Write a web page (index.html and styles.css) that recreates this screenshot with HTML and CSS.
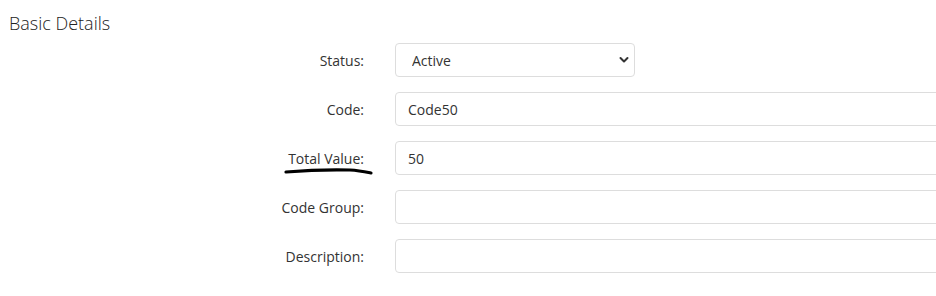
FILE: index.html
```html
<html lang="en"><head>
    <meta charset="UTF-8">
    <meta name="viewport" content="width=device-width, initial-scale=1.0">
    <title>Basic Details</title>
    <link rel="stylesheet" href="styles.css">
</head>

<body>
    <div class="section">
        <h3 class="section_title">Basic Details</h3>
        <div class="form">
            <label class="form_label" for="status">Status:</label>
            <div class="select_wrap">
                <select id="status" class="form_select">
                    <option>Active</option>
                    <option>Inactive</option>
                </select>
                <svg class="chevron" width="12" height="8" viewBox="0 0 12 8">
                    <path d="M2.5 2 L6 5.5 L9.5 2" fill="none" stroke="#333" stroke-width="2" stroke-linecap="round" stroke-linejoin="round"/>
                </svg>
            </div>

            <label class="form_label" for="code">Code:</label>
            <div class="input_cell"><input type="text" id="code" class="form_input" value="Code50"></div>

            <div class="form_label marked">
                <label for="total">Total Value:</label>
                <svg class="scribble" width="90" height="10" viewBox="0 0 90 10">
                    <path d="M2 5 C 20 3.5, 45 2.5, 66 3 C 75 3.5, 82 5, 87 6" fill="none" stroke="#000" stroke-width="3.2" stroke-linecap="round"/>
                </svg>
            </div>
            <div class="input_cell"><input type="text" id="total" class="form_input" value="50"></div>

            <label class="form_label" for="group">Code Group:</label>
            <div class="input_cell"><input type="text" id="group" class="form_input" value=""></div>

            <label class="form_label" for="desc">Description:</label>
            <div class="input_cell"><input type="text" id="desc" class="form_input" value=""></div>
        </div>
    </div>
</body>
</html>
```

FILE: styles.css
```css
body {
    margin: 0;
    background-color: #fff;
    font-family: "Open Sans", "Noto Sans", sans-serif;
    color: #333;
    overflow: hidden;
}

.section {
    padding: 12px 0 0 9px;
}

.section_title {
    margin: 0;
    font-size: 18px;
    font-weight: 300;
    line-height: 22px;
    color: #222;
}

.form {
    display: grid;
    grid-template-columns: 355px 1fr;
    column-gap: 31px;
    row-gap: 15px;
    align-items: center;
    margin-top: 9px;
}

.form_label {
    text-align: right;
    font-size: 14px;
    color: #333;
}

.marked {
    position: relative;
}

.scribble {
    position: absolute;
    right: -10px;
    top: 18px;
}

.input_cell {
    overflow: hidden;
}

.form_input,
.form_select {
    box-sizing: border-box;
    height: 34px;
    border: 1px solid #ddd;
    border-radius: 4px;
    background-color: #fff;
    font-family: "Open Sans", "Noto Sans", sans-serif;
    font-size: 14px;
    color: #333;
    outline: none;
}

.form_input {
    display: block;
    width: 600px;
    padding: 0 12px;
}

.select_wrap {
    position: relative;
    width: 240px;
}

.form_select {
    -webkit-appearance: none;
    appearance: none;
    width: 240px;
    padding: 0 16px;
}

.chevron {
    position: absolute;
    right: 5px;
    top: 13px;
}
```
